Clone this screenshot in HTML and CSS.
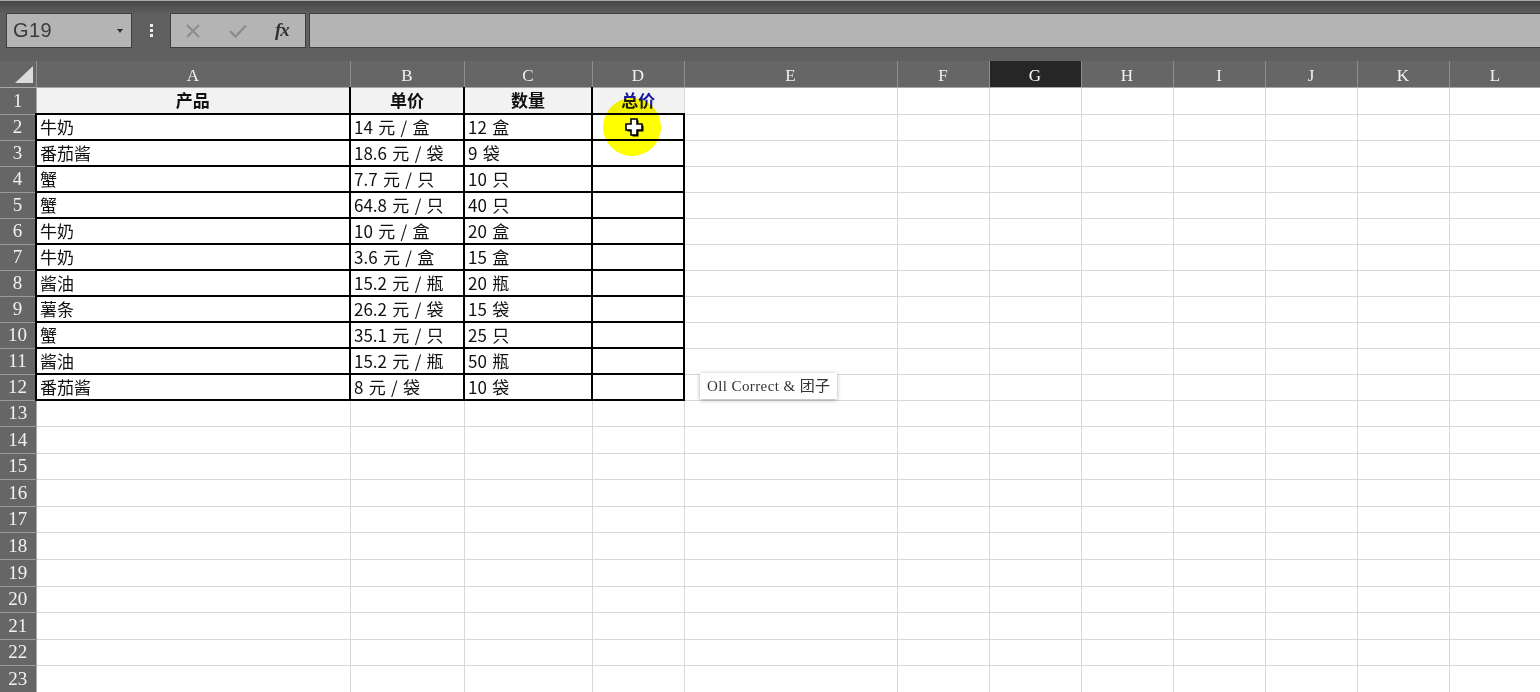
FILE: index.html
```html
<!DOCTYPE html>
<html lang="zh-CN">
<head>
<meta charset="utf-8">
<title>Sheet</title>
<link rel="stylesheet" href="styles.css">
</head>
<body>
<div class="app">
  <div class="topband"></div>
  <div class="fbar">
    <div class="namebox"><span class="ref">G19</span><span class="caret"></span></div>
    <div class="grip"><i></i><i></i><i></i></div>
    <div class="fnbox">
      <svg class="ico" width="18" height="18" viewBox="0 0 18 18"><path d="M3 3 L15 15 M15 3 L3 15" stroke="#8c8c8c" stroke-width="2" fill="none"/></svg>
      <svg class="ico" width="20" height="18" viewBox="0 0 20 18"><path d="M2 9 L7.5 14.5 L18 3.5" stroke="#8c8c8c" stroke-width="2.4" fill="none"/></svg>
      <span class="fx">fx</span>
    </div>
    <div class="finput"></div>
  </div>
  <div class="sheet">
    <table class="grid">
      <colgroup>
        <col class="w-rh"><col class="w-a"><col class="w-b"><col class="w-c"><col class="w-d"><col class="w-e">
        <col class="w-n"><col class="w-n"><col class="w-n"><col class="w-n"><col class="w-n"><col class="w-n"><col class="w-n">
      </colgroup>
      <thead>
        <tr class="colhdr">
          <th class="corner"><span class="tri"></span></th>
          <th>A</th><th>B</th><th>C</th><th>D</th><th>E</th><th>F</th><th class="sel">G</th><th>H</th><th>I</th><th>J</th><th>K</th><th>L</th>
        </tr>
      </thead>
      <tbody>
        <tr class="tall"><th class="rh">1</th><td class="h ha">产品</td><td class="h hb">单价</td><td class="h hb">数量</td><td class="h hd blue">总价</td><td></td><td></td><td></td><td></td><td></td><td></td><td></td><td></td></tr>
        <tr><th class="rh">2</th><td class="t">牛奶</td><td class="t">14 元 / 盒</td><td class="t">12 盒</td><td class="t"></td><td></td><td></td><td></td><td></td><td></td><td></td><td></td><td></td></tr>
        <tr><th class="rh">3</th><td class="t">番茄酱</td><td class="t">18.6 元 / 袋</td><td class="t">9 袋</td><td class="t"></td><td></td><td></td><td></td><td></td><td></td><td></td><td></td><td></td></tr>
        <tr><th class="rh">4</th><td class="t">蟹</td><td class="t">7.7 元 / 只</td><td class="t">10 只</td><td class="t"></td><td></td><td></td><td></td><td></td><td></td><td></td><td></td><td></td></tr>
        <tr><th class="rh">5</th><td class="t">蟹</td><td class="t">64.8 元 / 只</td><td class="t">40 只</td><td class="t"></td><td></td><td></td><td></td><td></td><td></td><td></td><td></td><td></td></tr>
        <tr><th class="rh">6</th><td class="t">牛奶</td><td class="t">10 元 / 盒</td><td class="t">20 盒</td><td class="t"></td><td></td><td></td><td></td><td></td><td></td><td></td><td></td><td></td></tr>
        <tr><th class="rh">7</th><td class="t">牛奶</td><td class="t">3.6 元 / 盒</td><td class="t">15 盒</td><td class="t"></td><td></td><td></td><td></td><td></td><td></td><td></td><td></td><td></td></tr>
        <tr><th class="rh">8</th><td class="t">酱油</td><td class="t">15.2 元 / 瓶</td><td class="t">20 瓶</td><td class="t"></td><td></td><td></td><td></td><td></td><td></td><td></td><td></td><td></td></tr>
        <tr><th class="rh">9</th><td class="t">薯条</td><td class="t">26.2 元 / 袋</td><td class="t">15 袋</td><td class="t"></td><td></td><td></td><td></td><td></td><td></td><td></td><td></td><td></td></tr>
        <tr><th class="rh">10</th><td class="t">蟹</td><td class="t">35.1 元 / 只</td><td class="t">25 只</td><td class="t"></td><td></td><td></td><td></td><td></td><td></td><td></td><td></td><td></td></tr>
        <tr><th class="rh">11</th><td class="t">酱油</td><td class="t">15.2 元 / 瓶</td><td class="t">50 瓶</td><td class="t"></td><td></td><td></td><td></td><td></td><td></td><td></td><td></td><td></td></tr>
        <tr><th class="rh">12</th><td class="t">番茄酱</td><td class="t">8 元 / 袋</td><td class="t">10 袋</td><td class="t"></td><td></td><td></td><td></td><td></td><td></td><td></td><td></td><td></td></tr>
        <tr><th class="rh">13</th><td></td><td></td><td></td><td></td><td></td><td></td><td></td><td></td><td></td><td></td><td></td><td></td></tr>
        <tr class="tall"><th class="rh">14</th><td></td><td></td><td></td><td></td><td></td><td></td><td></td><td></td><td></td><td></td><td></td><td></td></tr>
        <tr><th class="rh">15</th><td></td><td></td><td></td><td></td><td></td><td></td><td></td><td></td><td></td><td></td><td></td><td></td></tr>
        <tr class="tall"><th class="rh">16</th><td></td><td></td><td></td><td></td><td></td><td></td><td></td><td></td><td></td><td></td><td></td><td></td></tr>
        <tr><th class="rh">17</th><td></td><td></td><td></td><td></td><td></td><td></td><td></td><td></td><td></td><td></td><td></td><td></td></tr>
        <tr class="tall"><th class="rh">18</th><td></td><td></td><td></td><td></td><td></td><td></td><td></td><td></td><td></td><td></td><td></td><td></td></tr>
        <tr class="tall"><th class="rh">19</th><td></td><td></td><td></td><td></td><td></td><td></td><td></td><td></td><td></td><td></td><td></td><td></td></tr>
        <tr><th class="rh">20</th><td></td><td></td><td></td><td></td><td></td><td></td><td></td><td></td><td></td><td></td><td></td><td></td></tr>
        <tr class="tall"><th class="rh">21</th><td></td><td></td><td></td><td></td><td></td><td></td><td></td><td></td><td></td><td></td><td></td><td></td></tr>
        <tr><th class="rh">22</th><td></td><td></td><td></td><td></td><td></td><td></td><td></td><td></td><td></td><td></td><td></td><td></td></tr>
        <tr class="tall"><th class="rh">23</th><td></td><td></td><td></td><td></td><td></td><td></td><td></td><td></td><td></td><td></td><td></td><td></td></tr>
      </tbody>
    </table>
    <div class="spot"></div>
    <svg class="cursor" width="22" height="20" viewBox="0 0 22 20">
      <path d="M7.5 2.5 H13.5 V7.5 H18.5 V13.5 H13.5 V18.5 H7.5 V13.5 H2.5 V7.5 H7.5 Z" fill="#000"/>
      <path d="M6 1 H12 V6 H17 V12 H12 V17 H6 V12 H1 V6 H6 Z" fill="#fff" stroke="#000" stroke-width="1.6"/>
    </svg>
    <div class="tip">Oll Correct &amp; 团子</div>
  </div>
</div>
</body>
</html>
```
FILE: styles.css
```css
html, body {
  margin: 0;
  padding: 0;
  width: 1540px;
  height: 692px;
  overflow: hidden;
  background: #ffffff;
}
.app {
  width: 1540px;
  height: 692px;
  overflow: hidden;
  background: #606060;
  font-family: "Noto Sans CJK SC", "Noto Sans", sans-serif;
}
.topband {
  height: 13px;
  box-sizing: border-box;
  border-top: 1px solid #a9a9a9;
  background: linear-gradient(#474747, #5d5d5d);
}
.fbar {
  height: 35px;
  display: flex;
  align-items: stretch;
  margin-bottom: 13px;
}
.namebox {
  margin-left: 6px;
  width: 126px;
  box-sizing: border-box;
  background: #b4b4b4;
  border: 1px solid #3f3f3f;
  display: flex;
  align-items: center;
  justify-content: space-between;
  padding: 0 8px 0 6px;
}
.ref {
  font-family: "Liberation Sans", Arial, sans-serif;
  font-size: 20px;
  color: #3b3b3b;
  letter-spacing: 0.4px;
}
.caret {
  width: 0;
  height: 0;
  border-left: 3.5px solid transparent;
  border-right: 3.5px solid transparent;
  border-top: 4px solid #333;
  margin-top: 1px;
}
.grip {
  width: 38px;
  display: flex;
  flex-direction: column;
  align-items: center;
  justify-content: center;
  gap: 2px;
}
.grip i {
  display: block;
  width: 3px;
  height: 3px;
  background: #ececec;
}
.fnbox {
  width: 136px;
  box-sizing: border-box;
  background: #b4b4b4;
  border: 1px solid #3f3f3f;
  display: flex;
  align-items: center;
  padding-left: 13px;
}
.fnbox .ico { flex: none; }
.fnbox .ico + .ico { margin-left: 26px; }
.fx {
  margin-left: 27px;
  font-family: "Liberation Serif", "Times New Roman", serif;
  font-style: italic;
  font-weight: bold;
  font-size: 19px;
  color: #333;
  letter-spacing: -1px;
  line-height: 1;
  margin-top: -3px;
}
.finput {
  flex: 1;
  margin-left: 3px;
  background: #b4b4b4;
  border: 1px solid #3f3f3f;
  border-right: none;
}
.sheet {
  position: relative;
  background: #fff;
}
.grid {
  border-collapse: collapse;
  table-layout: fixed;
  width: 1541px;
}
.w-rh { width: 36px; }
.w-a { width: 314px; }
.w-b { width: 114px; }
.w-c { width: 128px; }
.w-d { width: 92px; }
.w-e { width: 213px; }
.w-n { width: 92px; }
.grid tr { height: 26px; }
.grid th, .grid td {
  padding: 0;
  height: 26px;
  box-sizing: border-box;
}
.grid tr.tall, .grid tr.tall th, .grid tr.tall td {
  height: 27px;
}
.colhdr th {
  background: #666666;
  color: #f2f2f2;
  font-family: "Liberation Serif", "DejaVu Serif", serif;
  font-weight: normal;
  font-size: 17px;
  text-align: center;
  border-right: 1px solid #8f8f8f;
  border-bottom: 1px solid #a8a8a8;
  padding-top: 4px;
  line-height: 20px;
}
.colhdr th.sel {
  background: #262626;
  color: #ffffff;
}
.corner {
  position: relative;
}
.tri {
  position: absolute;
  right: 3px;
  bottom: 4px;
  width: 0;
  height: 0;
  border-left: 18px solid transparent;
  border-bottom: 17px solid #dcdcdc;
}
.rh {
  background: #666666;
  color: #f2f2f2;
  font-family: "Liberation Serif", "DejaVu Serif", serif;
  font-weight: normal;
  font-size: 19px;
  text-align: center;
  border-right: 1px solid #a8a8a8;
  border-bottom: 1px solid #9a9a9a;
  line-height: 24px;
}
.grid td {
  border: 1px solid #d8d8d8;
  font-size: 17px;
  word-spacing: 1.5px;
  color: #111;
  padding-left: 3px;
  white-space: nowrap;
  overflow: hidden;
  line-height: 22px;
}
.grid td.t {
  border: 2px solid #000;
}
.grid td.h {
  background: #f2f2f2;
  font-weight: bold;
  text-align: center;
  padding-left: 0;
  border-bottom: 2px solid #000;
}
.grid td.ha, .grid td.hb {
  border-right: 2px solid #000;
}
.grid td.blue {
  color: #1b1b9e;
}
.spot {
  position: absolute;
  left: 603px;
  top: 37px;
  width: 58px;
  height: 58px;
  border-radius: 50%;
  background: #ffff00;
  mix-blend-mode: multiply;
}
.cursor {
  position: absolute;
  left: 625px;
  top: 57px;
}
.tip {
  position: absolute;
  left: 700px;
  top: 312px;
  height: 26px;
  box-sizing: border-box;
  padding: 0 7px;
  background: #fff;
  box-shadow: 0 1px 4px rgba(0, 0, 0, 0.35);
  font-family: "Liberation Serif", "Times New Roman", "Noto Sans CJK SC", serif;
  font-size: 15px;
  letter-spacing: 0.4px;
  color: #333;
  line-height: 26px;
  white-space: nowrap;
}
```
